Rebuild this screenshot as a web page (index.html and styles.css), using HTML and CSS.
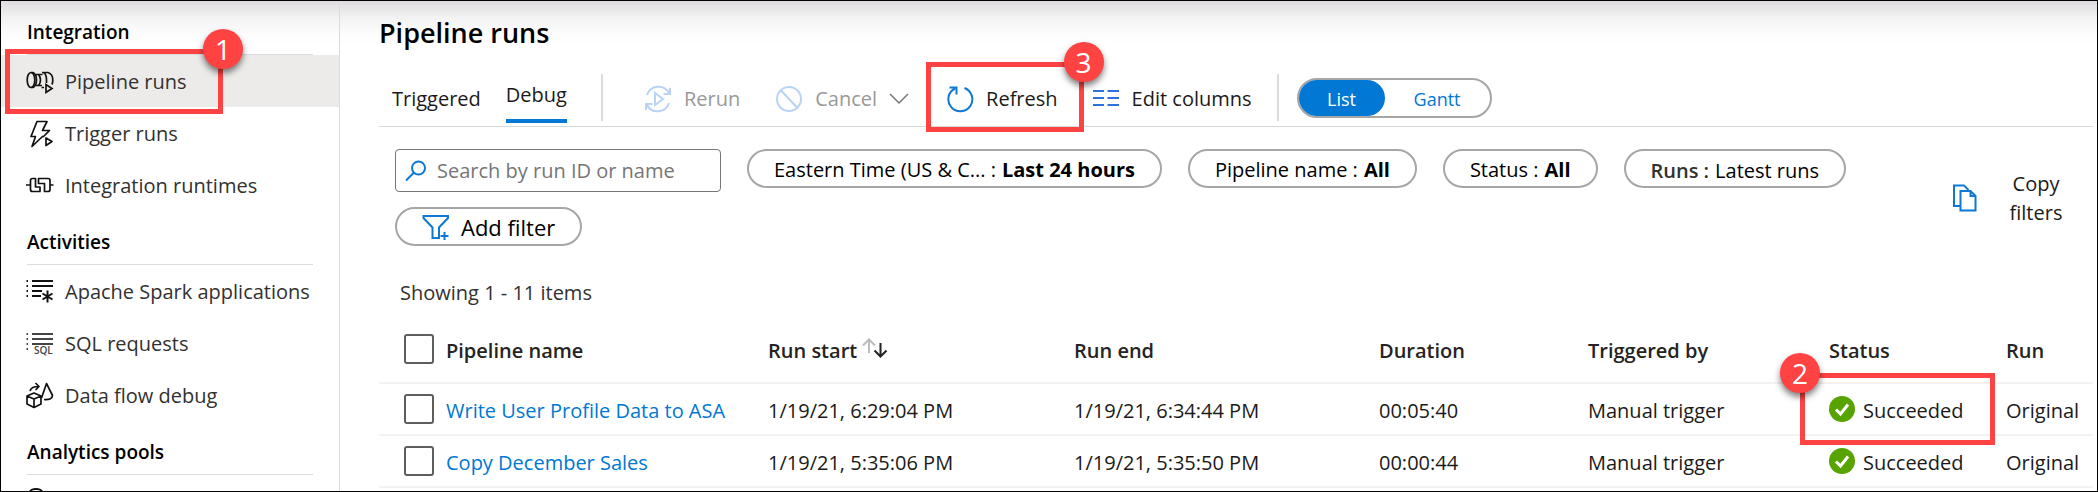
FILE: index.html
```html
<!DOCTYPE html>
<html lang="en">
<head>
<meta charset="utf-8">
<title>Pipeline runs</title>
<link rel="stylesheet" href="styles.css">
</head>
<body>
<div class="app">
  <nav class="sidebar" aria-label="Monitor">
    <h2 class="group-title">Integration</h2>
    <a class="nav-item selected" href="#pipeline-runs">
      <svg class="nav-icon" viewBox="0 0 28 28" fill="none" stroke="#111" stroke-width="1.700"><ellipse cx="5" cy="12" rx="3.800" ry="7.500"/><path d="M5 4.500H7Q10.500 6 10.500 12T7 19.500H5M10 6.500H16.500M10 17.500H16M12.500 6.500Q14.500 9 14.500 12T12.500 17.500M16 4.500H17.500Q20.500 6 20.500 12V15M15.500 19.500H18M18.500 4.500H22Q26.800 6 26.800 12 26.800 14.500 26 16.500"/><path d="M20 16.500V24.500L26 20.500Z"/></svg>
      Pipeline runs
      <span class="callout callout-nav"><span class="badge badge-right">1</span></span>
    </a>
    <a class="nav-item" href="#trigger-runs">
      <svg class="nav-icon" viewBox="0 0 28 28" fill="none" stroke="#111" stroke-width="1.700" stroke-linejoin="round"><path d="M17 16 6 26.500 9.500 16.500H5L11 1.500H21L16.500 10.500H23.500L17 17"/><path d="M20 18V25.500L26 21.500Z"/></svg>
      Trigger runs
    </a>
    <a class="nav-item" href="#integration-runtimes">
      <svg class="nav-icon" viewBox="0 0 28 28" fill="none" stroke="#111" stroke-width="1.700" stroke-linejoin="round"><path d="M0 13H4M24 13H27.500"/><path d="M6.500 6.500H9.500V15H14V19.500H6.500Q4.500 19.500 4.500 17.500V8.500Q4.500 6.500 6.500 6.500Z"/><path d="M12.500 6.500H22Q24 6.500 24 8.500V17.500Q24 19.500 22 19.500H18.500V11.500H12.500Z"/></svg>
      Integration runtimes
    </a>
    <h2 class="group-title">Activities</h2>
    <a class="nav-item" href="#spark">
      <svg class="nav-icon" viewBox="0 0 28 28" fill="none" stroke="#111" stroke-width="2"><path d="M6 3H27M6 8H27M6 13H16M6 18H15"/><path d="M.5 3H2M.5 8H2M.5 13H2M.5 18H2"/><path d="M21.500 12.500V24.500M16.500 15.500 26.500 21.500M26.500 15.500 16.500 21.500"/></svg>
      Apache Spark applications
    </a>
    <a class="nav-item" href="#sql">
      <svg class="nav-icon" viewBox="0 0 28 28" fill="none" stroke="#444" stroke-width="2"><path d="M6 4H27M6 9H27M6 14H27"/><path d="M.5 4H2M.5 9H2M.5 14H2M.5 19H2"/><text x="8" y="24" class="sql-text">SQL</text></svg>
      SQL requests
    </a>
    <a class="nav-item" href="#debug">
      <svg class="nav-icon" viewBox="0 0 28 28" fill="none" stroke="#111" stroke-width="1.700" stroke-linejoin="round"><path d="M1 14 8 11 15 14V22L8 25.500 1 22ZM1 14 8 17 15 14M8 17V25.500"/><path d="M15.500 16 20.500 1.500 26.500 13.500Q26.500 18 18 17.500"/><path d="M4 9Q5 4.500 12.500 4.500M9.500 1 13 4.500 9.500 8"/></svg>
      Data flow debug
    </a>
    <h2 class="group-title">Analytics pools</h2>
    <a class="nav-item" href="#pools" aria-label="Pools">
      <svg class="nav-icon" viewBox="0 0 28 28" fill="none" stroke="#111" stroke-width="2"><ellipse cx="10" cy="4" rx="6" ry="3"/><path d="M4 4V22Q10 27 16 22V4"/></svg>
    </a>
  </nav>

  <main class="main">
    <h1 class="title">Pipeline runs</h1>
    <div class="toolbar">
      <div class="tabs">
        <button class="tab" type="button">Triggered</button>
        <button class="tab active" type="button">Debug</button>
      </div>
      <span class="separator"></span>
      <div class="commands">
        <button class="command rerun" type="button" disabled>
          <svg class="icon" viewBox="0 0 28 28" fill="none" stroke="#b9d3f5" stroke-width="2"><path d="M3 10A12 12 0 0 1 25 8M25 18A12 12 0 0 1 3 20"/><path d="M26 3V9H19.500M2 25V19H8.500M11 8V20L19 14Z"/></svg>
          Rerun
        </button>
        <button class="command cancel" type="button" disabled>
          <svg class="icon" viewBox="0 0 28 28" fill="none" stroke="#b9d3f5" stroke-width="2"><circle cx="14" cy="14" r="12"/><path d="M6 5.500 22 22.500"/></svg>
          Cancel
          <svg class="chevron" viewBox="0 0 20 12" fill="none" stroke="#777" stroke-width="1.500"><path d="M1 1 10 10 19 1"/></svg>
        </button>
        <button class="command refresh" type="button">
          <svg class="icon" viewBox="0 0 28 28" fill="none" stroke="#0f78d4" stroke-width="2"><path d="M18.500 3A12 12 0 1 1 9 3.500M3.500 2.500H10.500V9.500"/></svg>
          Refresh
          <span class="callout callout-refresh"><span class="badge badge-right">3</span></span>
        </button>
        <button class="command columns" type="button">
          <svg class="icon" viewBox="0 0 28 28" fill="none" stroke="#2a72e0" stroke-width="2"><path d="M1 6H12M15.500 6H27M1 13H12M15.500 13H27M1 20H12M15.500 20H27"/></svg>
          Edit columns
        </button>
      </div>
      <span class="separator"></span>
      <div class="toggle">
        <button class="toggle-option on" type="button">List</button>
        <button class="toggle-option" type="button">Gantt</button>
      </div>
    </div>

    <div class="filter-bar">
      <div class="filters">
        <label class="search">
          <svg class="search-icon" viewBox="0 0 22 22" fill="none" stroke="#0f78d4" stroke-width="2"><circle cx="13.500" cy="8" r="6.500"/><path d="M9 12.500 1 20.500"/></svg>
          <input class="search-input" type="text" placeholder="Search by run ID or name" aria-label="Search by run ID or name">
        </label>
        <button class="pill" type="button">Eastern Time (US &amp; C... : <b>Last 24 hours</b></button>
        <button class="pill" type="button">Pipeline name : <b>All</b></button>
        <button class="pill" type="button">Status : <b>All</b></button>
        <button class="pill runs" type="button"><span class="runs-label">Runs :</span> Latest runs</button>
        <button class="pill add" type="button">
          <svg class="icon" viewBox="0 0 28 28" fill="none" stroke="#0f78d4" stroke-width="2"><path d="M1.500 3H26V5L17 14.500V25H10.500V14.500L1.500 5Z"/><path d="M22.500 19V27M18.500 23H26.500"/></svg>
          Add filter
        </button>
      </div>
      <button class="copy" type="button">
        <svg class="copy-icon" viewBox="0 0 24 28" fill="none" stroke="#0f78d4" stroke-width="2"><path d="M7.500 22H1V1.500H11L15.500 6"/><path d="M7.500 7H17.500L22.500 12V26.500H7.500ZM17.500 7V12H22.500"/></svg>
        <span class="copy-label">Copy filters</span>
      </button>
    </div>

    <p class="count">Showing 1 - 11 items</p>

    <table class="runs-table">
      <colgroup>
        <col class="c-check"><col class="c-name"><col class="c-start"><col class="c-end"><col class="c-duration"><col class="c-trigger"><col class="c-status"><col class="c-run">
      </colgroup>
      <thead>
        <tr>
          <th><input class="check" type="checkbox" aria-label="Select all runs"></th>
          <th>Pipeline name</th>
          <th>Run start <svg class="sort" viewBox="0 0 26 20" fill="none" stroke-width="2"><path stroke="#bbb" d="M7 15V1.500M1 7.500 7 1.500 13 7.500"/><path stroke="#222" d="M18.500 5V18.500M12.500 12.500 18.500 18.500 24.500 12.500"/></svg></th>
          <th>Run end</th>
          <th>Duration</th>
          <th>Triggered by</th>
          <th>Status</th>
          <th>Run</th>
        </tr>
      </thead>
      <tbody>
        <tr>
          <td><input class="check" type="checkbox" aria-label="Select Write User Profile Data to ASA"></td>
          <td><a class="run-link" href="#run-1">Write User Profile Data to ASA</a></td>
          <td>1/19/21, 6:29:04 PM</td>
          <td>1/19/21, 6:34:44 PM</td>
          <td>00:05:40</td>
          <td>Manual trigger</td>
          <td class="status-cell"><span class="status"><svg class="ok" viewBox="0 0 26 26"><circle cx="13" cy="13" r="13" fill="#57a300"/><path d="M7 13.500 11.500 18 19 8.500" fill="none" stroke="#fff" stroke-width="3"/></svg>Succeeded</span><span class="callout callout-status"><span class="badge badge-left">2</span></span></td>
          <td>Original</td>
        </tr>
        <tr>
          <td><input class="check" type="checkbox" aria-label="Select Copy December Sales"></td>
          <td><a class="run-link" href="#run-2">Copy December Sales</a></td>
          <td>1/19/21, 5:35:06 PM</td>
          <td>1/19/21, 5:35:50 PM</td>
          <td>00:00:44</td>
          <td>Manual trigger</td>
          <td><span class="status"><svg class="ok" viewBox="0 0 26 26"><circle cx="13" cy="13" r="13" fill="#57a300"/><path d="M7 13.500 11.500 18 19 8.500" fill="none" stroke="#fff" stroke-width="3"/></svg>Succeeded</span></td>
          <td>Original</td>
        </tr>
      </tbody>
    </table>
  </main>
</div>
</body>
</html>
```
FILE: styles.css
```css
* { box-sizing: border-box; }

body {
  margin: 0;
  font-family: "Open Sans", "Noto Sans", sans-serif;
  font-size: 20px;
  line-height: 28px;
  color: #1b1a19;
}

button, input { font: inherit; color: inherit; }
button { background: none; border: 0; padding: 0; white-space: nowrap; }

.app {
  display: flex;
  height: 100vh;
  overflow: hidden;
  border: 1px solid #000;
  background: linear-gradient(#dedcde, #f3f2f3 16px, #fcfcfc 32px, #fff 44px);
}

/* Sidebar */
.sidebar {
  flex: 0 0 339px;
  border-right: 1px solid #dcdcdc;
}

.group-title {
  height: 54px;
  margin: 0 26px 0 26px;
  padding-top: 17px;
  border-bottom: 1px solid #dcdcdc;
  font-size: 19px;
  font-weight: 600;
  color: #000;
}

.nav-item {
  position: relative;
  display: flex;
  align-items: center;
  gap: 11px;
  height: 52px;
  padding-top: 1px;
  padding-left: 25px;
  color: #323130;
  text-decoration: none;
}

.nav-item.selected { background: #edebe9; }
.nav-icon { width: 28px; height: 28px; }
.sql-text { font-size: 10px; fill: #444; stroke: none; font-weight: 600; }

/* Numbered callouts */
.callout {
  position: absolute;
  z-index: 1;
  border: 5px solid #ff4343;
  pointer-events: none;
}

.badge {
  position: absolute;
  top: -25px;
  width: 40px;
  height: 40px;
  border-radius: 50%;
  background: #ff4343;
  box-shadow: 0 4px 6px rgba(0, 0, 0, 0.5);
  color: #fff;
  font-size: 28px;
  line-height: 40px;
  text-align: center;
}

.badge-right { right: -25px; }
.badge-left { left: -25px; }
.callout-nav { left: 4px; top: -6px; width: 218px; height: 65px; }
.callout-refresh { left: -20px; right: -26px; top: -12px; height: 70px; }
.callout-status { left: -29px; right: 11px; top: -11px; height: 72px; }

/* Main area */
.main { flex: 1; min-width: 0; padding: 0 4px 0 39px; }

.title {
  margin: 0;
  padding-top: 13px;
  font-size: 27px;
  line-height: 37px;
  font-weight: 600;
  color: #000;
}

.toolbar {
  display: flex;
  height: 76px;
  padding: 23px 0 4px 13px;
  border-bottom: 1px solid #d8d8d8;
}

.tabs { display: flex; gap: 25px; margin-right: 34px; }
.tab { height: 49px; padding-top: 4px; border-bottom: 4px solid transparent; }
.tab.active { padding-top: 0; padding-bottom: 4px; border-color: #0078d4; }
.separator { width: 2px; height: 47px; background: #dcdcdc; }
.commands { display: flex; align-items: center; height: 47px; margin-right: 25px; }
.command { position: relative; display: flex; align-items: center; gap: 12px; height: 47px; padding-top: 2px; }
.command:disabled { color: #999; }
.icon { width: 28px; height: 28px; }
.rerun { margin-left: 41px; }
.cancel { margin-left: 35px; }
.refresh { margin-left: 37px; }
.columns { margin-left: 34px; }
.chevron { width: 20px; height: 12px; }

.toggle {
  display: flex;
  width: 195px;
  height: 40px;
  margin: 4px 0 0 18px;
  border: 2px solid #a6a6a6;
  border-radius: 20px;
  font-size: 18px;
}

.toggle-option { flex: 1; padding-top: 2px; color: #0078d4; }
.toggle-option.on { flex: 0 0 86px; border-radius: 18px; background: #0078d4; color: #fff; }

.filter-bar { display: flex; padding: 22px 29px 0 16px; }
.filters { display: flex; flex: 1; flex-wrap: wrap; gap: 15px 26px; }

.search {
  display: flex;
  align-items: center;
  gap: 10px;
  width: 326px;
  height: 43px;
  padding: 0 9px;
  border: 1px solid #767676;
  border-radius: 4px;
  background: #fff;
}

.search-icon { flex: none; width: 22px; height: 22px; }
.search-input { flex: 1; min-width: 0; padding: 0; border: 0; outline: 0; background: none; }
.search-input::placeholder { color: #767676; opacity: 1; }

.pill {
  display: inline-flex;
  align-items: center;
  gap: 6px;
  height: 39px;
  padding: 2px 25px 0;
  border: 2px solid #a6a6a6;
  border-radius: 20px;
  color: #000;
}

.pill.runs { padding-top: 5px; }
.runs-label { font-weight: 600; color: #323130; }
.pill.add { gap: 11px; padding-top: 0; font-size: 22px; }

.copy { display: flex; align-items: center; gap: 31px; height: 97px; line-height: 29px; }
.copy-icon { width: 24px; height: 28px; }
.copy-label { width: 56px; white-space: normal; text-align: center; }

.count { margin: 33px 0 0 21px; color: #323130; }

/* Runs table */
.runs-table {
  width: 100%;
  margin-top: 10px;
  border-collapse: collapse;
  table-layout: fixed;
}

.c-check { width: 67px; }
.c-name { width: 322px; }
.c-start { width: 306px; }
.c-end { width: 305px; }
.c-duration { width: 209px; }
.c-trigger { width: 241px; }
.c-status { width: 177px; }
.c-run { width: 87px; }

.runs-table th, .runs-table td {
  height: 52px;
  padding: 3px 0 0;
  border-bottom: 2px solid #f3f2f1;
  text-align: left;
  white-space: nowrap;
}

.runs-table th { height: 66px; padding-top: 2px; font-weight: 600; color: #252423; }
.runs-table td:first-child { padding: 0 0 0 25px; }
.runs-table th:first-child { padding: 0 0 1px 25px; }

.check {
  display: block;
  appearance: none;
  width: 30px;
  height: 30px;
  margin: 0;
  border: 2px solid #605e5c;
  border-radius: 3px;
  background: #fff;
}

.run-link { color: #0078d4; text-decoration: none; }
.sort { width: 26px; height: 20px; margin-left: 0; }
.status-cell { position: relative; }
.status { display: flex; align-items: center; gap: 8px; }
.ok { width: 26px; height: 26px; margin-bottom: 4px; }
```
